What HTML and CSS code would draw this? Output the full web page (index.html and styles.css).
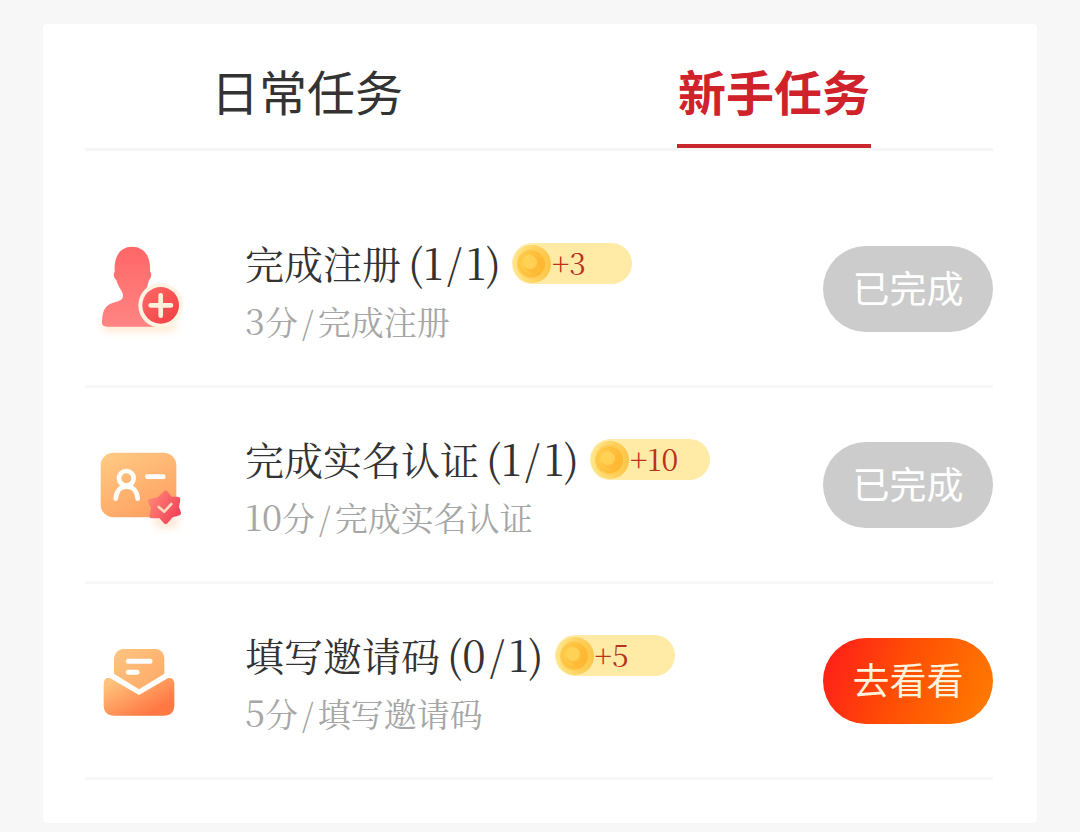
FILE: index.html
```html
<!DOCTYPE html>
<html lang="zh-CN">
  <head>
    <meta charset="UTF-8" />
    <meta name="viewport" content="width=device-width, initial-scale=1.0" />
    <title>新手任务</title>
    <link rel="stylesheet" href="styles.css">
  </head>
  <body>
    <!-- shared coin icon -->
    <svg class="defs" width="0" height="0" aria-hidden="true">
      <defs>
        <radialGradient id="coinFace" cx="0.35" cy="0.45" r="0.65">
          <stop offset="0" stop-color="#ffdc62" />
          <stop offset="0.5" stop-color="#ffc644" />
          <stop offset="1" stop-color="#fdb52e" />
        </radialGradient>
        <linearGradient id="coinRim" x1="0" y1="0" x2="1" y2="0">
          <stop offset="0" stop-color="#ffe68a" />
          <stop offset="1" stop-color="#fcc545" />
        </linearGradient>
      </defs>
      <symbol id="coin" viewBox="0 0 40 40">
        <circle cx="20" cy="20" r="19" fill="url(#coinRim)" />
        <circle cx="20" cy="20" r="15" fill="#ffca50" />
        <circle cx="20" cy="20" r="13" fill="url(#coinFace)" />
        <path d="M21 11l8 5v8l-8 5-8-5v-8z" fill="#fdb02c" opacity="0.4" stroke="#fdb02c" stroke-width="2" stroke-linejoin="round" />
        <circle cx="18" cy="18" r="7" fill="#ffd459" opacity="0.8" />
      </symbol>
    </svg>

    <main class="card">
      <div class="tabs" role="tablist">
        <button class="tab" type="button" role="tab" aria-selected="false">日常任务</button>
        <button class="tab active" type="button" role="tab" aria-selected="true">新手任务</button>
      </div>

      <ul class="task-list">
        <li class="task">
          <svg class="task-icon" viewBox="30 30 300 300" aria-hidden="true">
            <defs>
              <linearGradient id="userFill" x1="0" y1="0" x2="0" y2="1">
                <stop offset="0" stop-color="#ff6768" />
                <stop offset="1" stop-color="#ff8583" />
              </linearGradient>
              <linearGradient id="plusFill" x1="0" y1="0" x2="1" y2="1">
                <stop offset="0" stop-color="#ff6b68" />
                <stop offset="1" stop-color="#f33c42" />
              </linearGradient>
              <filter id="glow" x="-30%" y="-100%" width="160%" height="300%">
                <feGaussianBlur stdDeviation="12" />
              </filter>
            </defs>
            <path d="M64 276h226l-10 30H72z" fill="#ffdcb8" opacity="0.7" filter="url(#glow)" />
            <path d="M104 128C101 82 121 53 156 53c36 0 57 28 54 74 6 8 4 19-3 26-5 24-13 34-13 46 0 11 10 17 22 22 22 9 34 20 39 38 3 12-1 28-8 34H82c-13 0-17-6-16-17 2-37 12-49 41-57 16-5 22-9 22-19 0-14-14-24-20-47-8-7-10-17-5-25z" fill="url(#userFill)" />
            <circle cx="242" cy="229" r="67" fill="#fff4e4" />
            <circle cx="242" cy="229" r="55" fill="url(#plusFill)" />
            <path d="M242 199v61M212 229h61" fill="none" stroke="#fff0dc" stroke-width="14" stroke-linecap="round" />
          </svg>
          <div class="task-info">
            <h3 class="task-title">完成注册<span class="num">(1<span class="slash">/</span>1)</span>
              <span class="reward"><svg class="coin" aria-hidden="true"><use href="#coin" /></svg><span class="points">+3</span></span>
            </h3>
            <p class="task-desc"><span class="num">3</span>分<span class="slash">/</span>完成注册</p>
          </div>
          <button class="task-btn" type="button" disabled>已完成</button>
        </li>

        <li class="task">
          <svg class="task-icon" viewBox="30 15 300 300" aria-hidden="true">
            <defs>
              <linearGradient id="idFill" x1="0" y1="0" x2="0.6" y2="1">
                <stop offset="0" stop-color="#ffcc85" />
                <stop offset="1" stop-color="#ffa263" />
              </linearGradient>
              <linearGradient id="starFill" x1="0" y1="0" x2="1" y2="0.6">
                <stop offset="0" stop-color="#ff8877" />
                <stop offset="1" stop-color="#f4475c" />
              </linearGradient>
            </defs>
            <path d="M220 258h76l-6 34h-60z" fill="#ffd6b8" opacity="0.7" filter="url(#glow)" />
            <rect x="62" y="68" width="227" height="194" rx="38" fill="url(#idFill)" />
            <circle cx="139" cy="145" r="22" fill="none" stroke="#fff" stroke-width="14" />
            <path d="M107 206c2-24 15-37 33-37s31 13 33 37" fill="none" stroke="#fff" stroke-width="14" stroke-linecap="round" />
            <path d="M202 140h48" fill="none" stroke="#fff" stroke-width="14" stroke-linecap="round" />
            <path d="M257 190l13 18 23 0-4 24 6 17-22 6-16 19-16-18-25 1 5-25-9-18 24-4z" fill="url(#starFill)" stroke="url(#starFill)" stroke-width="16" stroke-linejoin="round" />
            <path d="M236 231l17 14 21-23" fill="none" stroke="#ffd9bd" stroke-width="8" stroke-linecap="round" stroke-linejoin="round" />
          </svg>
          <div class="task-info">
            <h3 class="task-title">完成实名认证<span class="num">(1<span class="slash">/</span>1)</span>
              <span class="reward"><svg class="coin" aria-hidden="true"><use href="#coin" /></svg><span class="points">+10</span></span>
            </h3>
            <p class="task-desc"><span class="num">10</span>分<span class="slash">/</span>完成实名认证</p>
          </div>
          <button class="task-btn" type="button" disabled>已完成</button>
        </li>

        <li class="task">
          <svg class="task-icon" viewBox="30 3 300 300" aria-hidden="true">
            <defs>
              <linearGradient id="paperFill" x1="0" y1="0" x2="1" y2="1">
                <stop offset="0" stop-color="#ffc581" />
                <stop offset="1" stop-color="#ffa865" />
              </linearGradient>
              <linearGradient id="mailFill" x1="0" y1="0" x2="1" y2="1">
                <stop offset="0.1" stop-color="#ffc27c" />
                <stop offset="0.8" stop-color="#ff7742" />
                <stop offset="1" stop-color="#ff7b45" />
              </linearGradient>
            </defs>
            <path d="M128 57h99q23 2 26 26v48l-76 47-75-47V83q5-23 26-26z" fill="url(#paperFill)" />
            <path d="M91 145q-19-4-20 17v62q0 33 33 33h147q32 0 32-33v-62q-1-21-20-17l-86 50z" fill="url(#mailFill)" />
            <path d="M145 94h65M145 127h26" fill="none" stroke="#fff" stroke-width="15" stroke-linecap="round" />
          </svg>
          <div class="task-info">
            <h3 class="task-title">填写邀请码<span class="num">(0<span class="slash">/</span>1)</span>
              <span class="reward"><svg class="coin" aria-hidden="true"><use href="#coin" /></svg><span class="points">+5</span></span>
            </h3>
            <p class="task-desc"><span class="num">5</span>分<span class="slash">/</span>填写邀请码</p>
          </div>
          <button class="task-btn go" type="button">去看看</button>
        </li>
      </ul>
    </main>
  </body>
</html>
```

FILE: styles.css
```css
* {
  box-sizing: border-box;
}

body {
  margin: 0;
  padding: 24px 43px 9px;
  background: #f7f7f7;
  color: #333;
  font-family: "Noto Sans CJK SC", sans-serif;
}

button {
  border: none;
  font-family: inherit;
  cursor: pointer;
}

.defs {
  position: absolute;
}

.card {
  padding: 0 44px 43px 42px;
  background: #fff;
  border-radius: 4px;
}

/* tabs */
.tabs {
  display: flex;
  justify-content: space-between;
  padding: 0 122px 0 125px;
  border-bottom: 3px solid #f6f6f6;
}

.tab {
  height: 124px;
  padding: 12px 1px 0;
  background: none;
  border-bottom: 4px solid transparent;
  color: #333;
  font-size: 48px;
}

.tab.active {
  border-bottom-color: #c9272d;
  color: #d0222a;
  font-weight: 700;
}

/* task list */
.task-list {
  margin: 0;
  padding: 41px 0 0;
  list-style: none;
}

.task {
  display: flex;
  align-items: center;
  height: 196px;
  border-bottom: 3px solid #f7f7f7;
}

.task-icon {
  flex: none;
  width: 100px;
  height: 100px;
  margin: 0 55px 0 5px;
}

.task-info {
  flex: 1;
  padding-top: 2px;
  font-family: "Noto Serif CJK SC", "Noto Sans CJK SC", serif;
}

.task-title {
  display: flex;
  align-items: center;
  height: 60px;
  margin: 0;
  font-size: 39px;
  font-weight: 400;
  white-space: nowrap;
}

.task-title .num {
  margin: 0 11px 0 7px;
  font-size: 42px;
}

.task-title .slash {
  margin: 0 4px;
}

.task-desc {
  height: 56px;
  margin: 0;
  color: #a6a6a6;
  font-size: 33px;
  line-height: 56px;
}

.task-desc .num {
  font-size: 36px;
}

.task-desc .slash {
  margin: 0 4px;
}

.reward {
  display: flex;
  align-items: center;
  width: 120px;
  height: 41px;
  margin-top: 4px;
  background: #ffeaa6;
  border-radius: 21px;
  color: #b8321f;
  font-size: 30px;
}

.points {
  padding-bottom: 4px;
}

.coin {
  width: 40px;
  height: 40px;
}

.task-btn {
  flex: none;
  width: 170px;
  height: 86px;
  padding: 0 0 4px;
  background: #ccc;
  border-radius: 43px;
  color: #fff;
  font-size: 37px;
}

.task-btn:disabled {
  cursor: default;
}

.task-btn.go {
  background: linear-gradient(110deg, #ff1a1a, #ff4d05 45%, #ff7f00);
  color: #fff3dc;
}
```
